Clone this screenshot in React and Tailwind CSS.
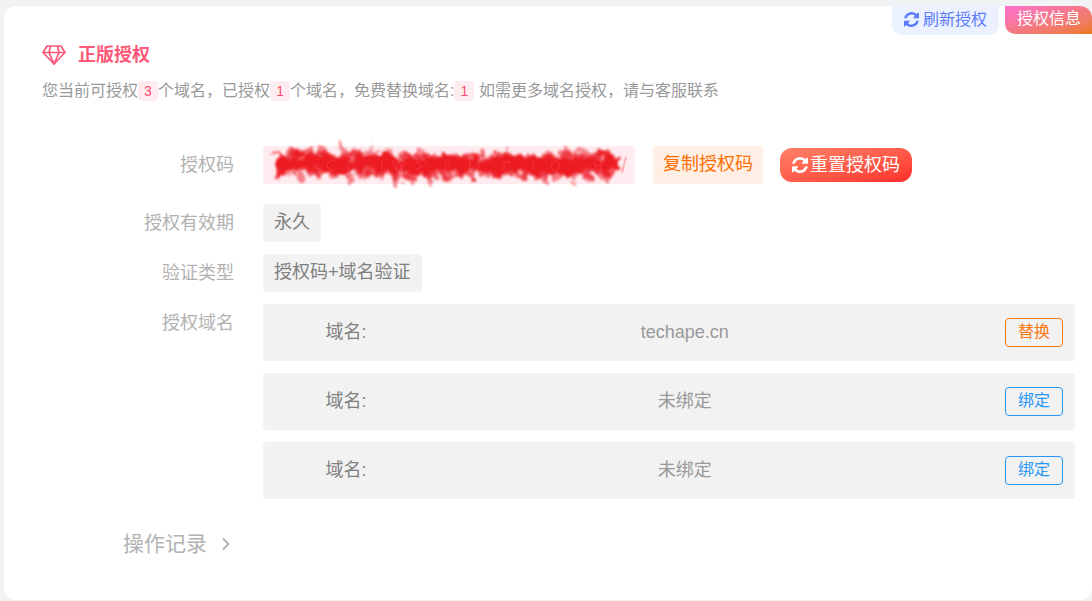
import React, { useState } from 'react';

const DOMAINS = [
  { id: 1, name: 'techape.cn', bound: true },
  { id: 2, name: '', bound: false },
  { id: 3, name: '', bound: false },
];

const RefreshIcon = ({ className }) => (
  <svg viewBox="0 0 1536 1536" className={className} fill="currentColor" aria-hidden="true">
    <path d="M1511 928q0 5-1 7-64 268-268 434.500T764 1536q-146 0-282.500-55T238 1324l-129 129q-19 19-45 19t-45-19-19-45V960q0-26 19-45t45-19h448q26 0 45 19t19 45-19 45l-137 137q71 66 161 102t187 36q134 0 250-65t186-179q11-17 53-117 8-23 30-23h192q13 0 22.500 9.500t9.500 22.500zm25-800v448q0 26-19 45t-45 19h-448q-26 0-45-19t-19-45 19-45l138-138Q969 256 768 256q-134 0-250 65T332 500q-11 17-53 117-8 23-30 23H50q-13 0-22.500-9.500T18 608v-7q65-268 270-434.500T768 0q146 0 284 55.500T1297 212l130-129q19-19 45-19t45 19 19 45z" />
  </svg>
);

const DiamondIcon = () => (
  <svg
    viewBox="0 0 24 20"
    className="h-5 w-6"
    fill="none"
    stroke="currentColor"
    strokeWidth="1.7"
    strokeLinejoin="round"
    aria-hidden="true"
  >
    <path d="M5 1h14l4 6.500L12 19 1 7.500z" />
    <path d="M1 7.500h22M8.500 1 7 7.500 12 19l5-11.500L15.500 1" />
  </svg>
);

// Brush strokes that cover the licence code
const Scribble = () => (
  <svg viewBox="0 0 372 38" className="h-[38px] w-full overflow-visible" fill="none" role="img" aria-label="授权码">
    <defs>
      <filter id="rough" x="-5%" y="-60%" width="110%" height="220%">
        <feTurbulence type="fractalNoise" baseFrequency="0.1 0.1" numOctaves="2" seed="12" result="noise" />
        <feDisplacementMap in="SourceGraphic" in2="noise" scale="20" xChannelSelector="R" yChannelSelector="G" />
        <feGaussianBlur stdDeviation="1.1" />
      </filter>
    </defs>
    <g filter="url(#rough)" stroke="#ed1c24" strokeLinejoin="round">
      <path
        d="M14 7 22 31 30 6 38 32 46 3 54 30 62 2 70 31 78 3 86 30 94 5 102 31 110 3 118 31 126 5 134 37 142 8 150 35 158 7 166 34 174 9 182 30 190 10 198 29 206 9 214 29 222 10 230 29 238 10 246 29 254 10 262 30 270 9 278 31 286 7 294 34 302 4 310 35 318 5 326 34 334 7 342 34 350 9 356 29"
        strokeWidth="7"
        opacity="0.5"
      />
      <path d="M12 18 40 16 70 18 100 17 130 20 165 19 200 20 240 19 280 20 315 18 357 19" strokeWidth="22" opacity="0.65" />
      <path d="M14 20 45 15 80 20 112 15 145 21 180 17 215 20 250 18 285 20 315 19 356 18" strokeWidth="15" />
    </g>
    <g stroke="#ff6070" strokeWidth="1" opacity="0.35">
      <path d="M72 15a5 5 0 1 0 1 8M85 17v8M119 15v9M130 15l3 9 3-9 3 9 3-9M153 16l7 4-7 4M184 14a2 2 0 1 0 1 0M184 19a3 3 0 1 0 1 0M207 16v6q4 5 8 0v-6M241 24v-8h6M270 24v-8M292 15a4 5 0 1 0 1 0M332 15v9M338 15v9M332 20h6" />
      <path d="M359 27l4-16" strokeWidth="2" />
    </g>
  </svg>
);

const Count = ({ children }) => (
  <span className="inline-block h-5 w-5 rounded bg-[#ffecf0] text-center text-sm leading-5 text-[#ff4d6f]">
    {children}
  </span>
);

const Row = ({ label, children }) => (
  <div className="flex items-start">
    <div className="w-[230px] shrink-0 text-right text-lg leading-[38px] text-[#b2b2b2]">{label}</div>
    <div className="ml-[29px] min-w-0 flex-1">{children}</div>
  </div>
);

const Tag = ({ children }) => (
  <span className="inline-block rounded bg-[#f2f2f2] px-[11px] pb-0.5 align-top text-lg leading-9 text-[#808080]">
    {children}
  </span>
);

const DomainItem = ({ domain }) => (
  <li className="grid h-[57px] grid-cols-[18fr_68fr_14fr] items-center rounded bg-[#f2f2f2] px-3">
    <span className="pb-0.5 text-center text-lg text-[#808080]">域名:</span>
    <span className="pb-0.5 text-center text-lg text-[#999999]">{domain.bound ? domain.name : '未绑定'}</span>
    <button
      type="button"
      className={`h-[29px] w-[58px] justify-self-end rounded border pb-0.5 text-base leading-6 ${
        domain.bound ? 'border-[#ff7811] text-[#ff7811]' : 'border-[#2997f7] text-[#2997f7]'
      }`}
    >
      {domain.bound ? '替换' : '绑定'}
    </button>
  </li>
);

const App = () => {
  const [showLog, setShowLog] = useState(false);

  return (
    <div className="min-h-screen overflow-hidden bg-[#f1f2f4] pt-1.5 pl-1 pb-px font-['Liberation_Sans','Noto_Sans_CJK_SC',sans-serif]">
      <main className="overflow-hidden rounded-xl bg-white pb-10">
        {/* Top actions */}
        <div className="flex items-start justify-end gap-1.5">
          <button
            type="button"
            className="flex h-[29px] items-center gap-1 rounded-b-[10px] bg-[#ecf1ff] px-3 pb-0.5 text-base text-[#5b7bfb]"
          >
            <RefreshIcon className="h-[15px] w-[15px]" />
            刷新授权
          </button>
          <span className="h-7 rounded-bl-[10px] bg-linear-to-br from-[#ff70cd] to-[#ec7a13] pr-[11px] pl-3 text-base leading-[26px] text-white">
            授权信息
          </span>
        </div>

        {/* Title */}
        <header className="px-[38px] pt-1.5">
          <h1 className="flex items-center gap-3 text-lg leading-7 font-bold text-[#ff5777]">
            <DiamondIcon />
            正版授权
          </h1>
          <p className="mt-2.5 text-base leading-6 text-[#999999]">
            您当前可授权<Count>3</Count>个域名，已授权<Count>1</Count>个域名，免费替换域名:<Count>1</Count>{' '}
            如需更多域名授权，请与客服联系
          </p>
        </header>

        {/* License details */}
        <section className="mt-[43px] flex flex-col gap-3 pr-[17px]">
          <Row label="授权码">
            <div className="mb-2 flex items-center">
              <div className="h-[38px] w-[372px] rounded bg-[#ffecf0]">
                <Scribble />
              </div>
              <button
                type="button"
                className="ml-[18px] h-[38px] rounded bg-[#ffefe4] px-2.5 pb-0.5 text-lg leading-8 text-[#ff6f06]"
              >
                复制授权码
              </button>
              <button
                type="button"
                className="ml-[17px] flex h-[34px] items-center gap-0.5 rounded-xl bg-linear-to-br from-[#ff8066] to-[#ff2a2a] px-3 text-lg text-white"
              >
                <RefreshIcon className="h-4 w-4" />
                重置授权码
              </button>
            </div>
          </Row>
          <Row label="授权有效期">
            <Tag>永久</Tag>
          </Row>
          <Row label="验证类型">
            <Tag>授权码+域名验证</Tag>
          </Row>
          <Row label="授权域名">
            <ul className="flex flex-col gap-3">
              {DOMAINS.map((domain) => (
                <DomainItem key={domain.id} domain={domain} />
              ))}
            </ul>
          </Row>
        </section>

        <button
          type="button"
          onClick={() => setShowLog(!showLog)}
          aria-expanded={showLog}
          className="mt-[29px] ml-[119px] flex items-center gap-3 text-[21px] leading-8 text-[#b2b2b2]"
        >
          操作记录
          <svg viewBox="0 0 14 14" className="h-3.5 w-3.5" fill="none" stroke="currentColor" strokeWidth="1.8" aria-hidden="true">
            <path d="M4 1.500 9.500 7 4 12.500" />
          </svg>
        </button>
      </main>
    </div>
  );
};

export default App;
